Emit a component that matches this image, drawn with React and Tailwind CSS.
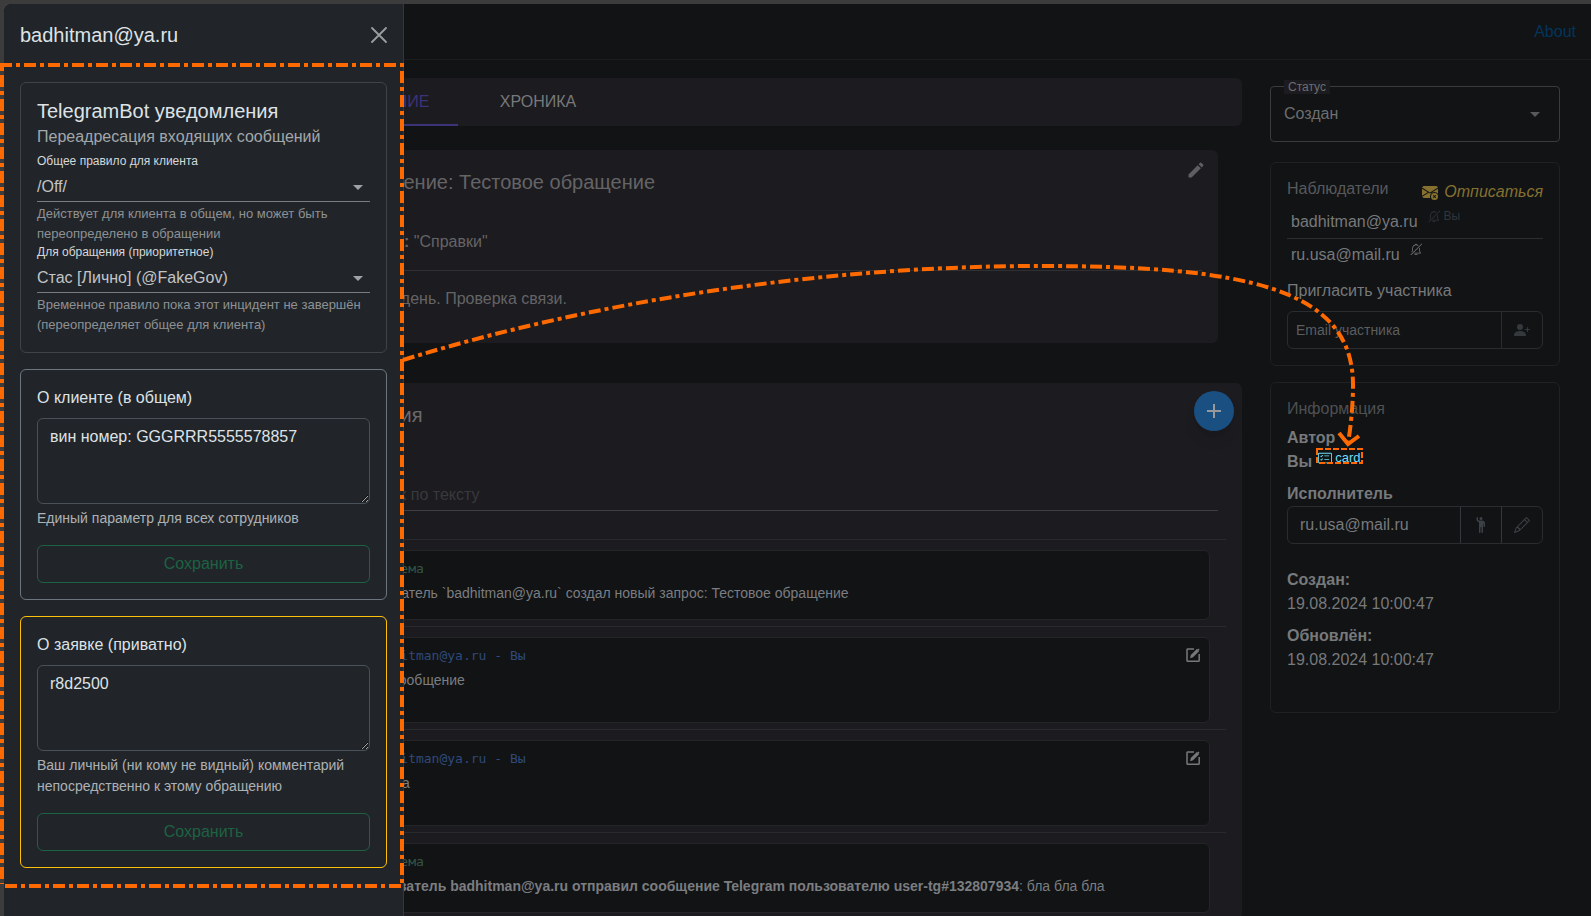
import { BsBellSlash, BsCardChecklist, BsEnvelopeXFill, BsPencil, BsPersonPlusFill, BsPersonRaisedHand } from "react-icons/bs";
import { MdAdd, MdArrowDropDown, MdEdit, MdSearch } from "react-icons/md";

function Chevron({ className }) {
  return <MdArrowDropDown className={`pointer-events-none size-6 shrink-0 ${className}`} aria-hidden="true" />;
}

function RuleSelect({ id, label, value, hint }) {
  return (
    <div>
      <label htmlFor={id} className="block text-[12px] leading-4 text-[#d5d7d9]">{label}</label>
      <div className="mt-1 flex items-center border-b border-[#7a7d80]">
        <select id={id} className="h-7 min-w-0 flex-1 appearance-none bg-transparent text-[16px] text-[#c2c4c6] outline-none">
          <option>{value}</option>
        </select>
        <Chevron className="text-[#a0a3a6]" />
      </div>
      <p className="mt-0.5 text-[13px] leading-5 text-[#8e9194]">{hint}</p>
    </div>
  );
}

function NoteCard({ id, title, value, hint, tone }) {
  return (
    <form className={`rounded-md border p-4 ${tone}`} onSubmit={(e) => e.preventDefault()}>
      <label htmlFor={id} className="block text-[16px] leading-6 text-[#dee2e6]">{title}</label>
      <textarea
        id={id}
        defaultValue={value}
        className="mt-2 block h-[86px] w-full resize-y rounded-md border border-[#495057] bg-transparent px-3 py-1.5 text-[16px] leading-6 text-[#dee2e6] outline-none"
      />
      <p className="mt-1 text-[14px] leading-[21px] text-[#adb1b5]">{hint}</p>
      <button type="submit" className="mt-4 h-[38px] w-full rounded-md border border-[#1d6243] text-[16px] text-[#1d6243]">
        Сохранить
      </button>
    </form>
  );
}

function Message({ author, system, editable, children }) {
  return (
    <li className="border-t border-[#2a2a2d] px-4 pt-2.5 pb-1.5">
      <article className={`rounded-md border border-[#242527] bg-[#111315] px-4 pt-2 ${editable ? "h-[86px]" : "h-[70px]"}`}>
        <header className="flex h-5 items-center justify-between pl-[22px] font-['DejaVu_Sans_Mono','Liberation_Mono',monospace] text-[13px]">
          <span className={system ? "text-[#345546]" : "text-[#2f4a78]"}>{author}</span>
          {editable && (
            <button type="button" aria-label="Редактировать" className="-mt-0.5 -mr-2 text-[#77797b]">
              <EditIcon />
            </button>
          )}
        </header>
        <p className="mt-1 text-[14px] leading-5 text-[#7b7d80]">{children}</p>
      </article>
    </li>
  );
}

function EditIcon() {
  return (
    <svg viewBox="0 0 16 16" className="size-4" fill="none" stroke="currentColor" strokeWidth="1.5" aria-hidden="true">
      <path d="M9 2H2.6A.8.8 0 0 0 2 2.8v10.6a.8.8 0 0 0 .8.8h10.6a.8.8 0 0 0 .8-.8V7" />
      <path d="M6 10.2l.4-1.8 5.4-5.4 1.3 1.3-5.4 5.4z M12.8 2l1.3 1.3" strokeWidth="1.3" fill="currentColor" />
    </svg>
  );
}

function Annotations() {
  return (
    <svg className="pointer-events-none absolute top-0 left-0 z-20 h-[916px] w-[1591px]" viewBox="0 0 1591 916" fill="none" stroke="#ff6a00" strokeWidth="4" aria-hidden="true">
      <g strokeDasharray="12 4 4 4">
        <path d="M0 65H404" />
        <path d="M2 65V884" strokeDashoffset="14" />
        <path d="M402 67V884" strokeDashoffset="-4" />
        <path d="M5 886H402" />
        <path d="M403 360C600 299 830 266 1040 266C1245 266 1353 288 1353 385C1353 405 1351 425 1348 443" />
      </g>
      <path d="M1339 433L1348 444L1359 436" />
      <rect x="1317" y="449" width="45" height="14" strokeWidth="2" strokeDasharray="6 2" />
    </svg>
  );
}

export default function App() {
  return (
    <div className="relative h-screen overflow-hidden bg-[#3c3c3c] pt-1 pl-1 font-['Liberation_Sans',Arial,sans-serif]">
      <div className="h-full rounded-tl-lg bg-[#111315]">
        <header className="flex h-14 items-center justify-end border-b border-[#1b1d1f] pr-[15px]">
          <a href="#about" className="text-[16px] text-[#03355c]">About</a>
        </header>

        <div className="flex items-start gap-7 pt-[18px] pr-[31px] pl-[294px]">
          <main className="min-w-0 flex-1">
            <div role="tablist" className="flex h-12 rounded-md bg-[#1c1b1f] text-[16px]">
              <button type="button" role="tab" aria-selected="true" className="w-40 border-b-2 border-[#3c3478] pt-0.5 text-[#3c3478]">ОБРАЩЕНИЕ</button>
              <button type="button" role="tab" aria-selected="false" className="w-40 text-[#77797c]">ХРОНИКА</button>
            </div>

            <section className="mx-6 mt-6 h-[193px] rounded-md bg-[#1c1b1f] p-4 text-[#646466]">
              <div className="flex items-start justify-between">
                <h1 className="text-[20px] leading-8">Обращение: Тестовое обращение</h1>
                <button type="button" aria-label="Изменить" className="-mt-1.5 -mr-1 text-[#5f5f61]">
                  <MdEdit className="size-5" />
                </button>
              </div>
              <p className="mt-8 text-[16px] leading-6"><b>Рубрика:</b> "Справки"</p>
              <hr className="mt-4 border-[#303033]" />
              <p className="mt-4 text-[16px] leading-6">Добрый день. Проверка связи.</p>
            </section>

            <section className="mt-10 rounded-md bg-[#1c1b1f] px-4 pt-2">
              <div className="-mr-2 flex items-start justify-between">
                <h2 className="pt-2 text-[20px] leading-8 text-[#6a6a6d]">Сообщения</h2>
                <button type="button" aria-label="Добавить сообщение" className="flex size-10 items-center justify-center rounded-full bg-[#1a4f82] text-[#96989a] shadow-lg">
                  <MdAdd className="size-6" />
                </button>
              </div>
              <div className="mx-2 mt-11 flex h-9 items-center gap-4 border-b border-[#3f3f42] pt-1">
                <MdSearch className="size-6 text-[#3f3f42]" aria-hidden="true" />
                <input aria-label="Поиск по тексту" placeholder="Поиск по тексту" className="min-w-0 flex-1 bg-transparent text-[16px] outline-none placeholder:text-[#39393c]" />
              </div>
              <ul className="mt-7">
                <Message author="Система" system>
                  Пользователь `badhitman@ya.ru` создал новый запрос: Тестовое обращение
                </Message>
                <Message author="badhitman@ya.ru - Вы" editable>Новое сообщение</Message>
                <Message author="badhitman@ya.ru - Вы" editable>Проверка</Message>
                <Message author="Система" system>
                  <b>Пользователь badhitman@ya.ru отправил сообщение Telegram пользователю user-tg#132807934</b>: бла бла бла
                </Message>
              </ul>
            </section>
          </main>

          <aside className="w-[290px] shrink-0 pt-2 text-[16px] text-[#77797b]">
            <div className="relative flex h-14 items-center rounded border border-[#3a3b3d] pr-3 pl-[13px]">
              <label htmlFor="status" className="absolute -top-[7px] left-[13px] bg-[#1c1b1f] px-1 text-[12px] leading-[14px] text-[#6c6e70]">Статус</label>
              <select id="status" className="h-full min-w-0 flex-1 appearance-none bg-transparent text-[#6c6e70] outline-none">
                <option>Создан</option>
              </select>
              <Chevron className="text-[#58595b]" />
            </div>

            <section className="mt-5 rounded-md border border-[#1f2123] p-4">
              <div className="flex items-start justify-between leading-6">
                <h2 className="-mt-0.5 text-[#58595b]">Наблюдатели</h2>
                <button type="button" className="mt-px flex items-center gap-1.5 text-[#857030] italic">
                  <BsEnvelopeXFill className="size-4" />Отписаться
                </button>
              </div>
              <ul>
                <li className="flex h-[35px] border-b border-[#2b2d2f] px-1 pt-1.5">
                  badhitman@ya.ru
                  <span className="ml-2.5 flex h-3 items-center gap-1 text-[12px] text-[#30363b]"><BsBellSlash className="size-3" />Вы</span>
                </li>
                <li className="flex px-1 pt-1 leading-6">
                  ru.usa@mail.ru
                  <BsBellSlash className="ml-2.5 size-3 text-[#77797b]" />
                </li>
              </ul>
              <label htmlFor="invite" className="mt-3 block leading-6">Пригласить участника</label>
              <div className="mt-2 flex h-[38px] rounded-md border border-[#2a2d30]">
                <input id="invite" placeholder="Email участника" className="min-w-0 flex-1 bg-transparent px-2 text-[14px] outline-none placeholder:text-[#5b5d5f]" />
                <button type="button" aria-label="Пригласить" className="flex w-[41px] items-center justify-center border-l border-[#2a2d30] text-[#34393e]">
                  <BsPersonPlusFill className="size-4" />
                </button>
              </div>
            </section>

            <section className="mt-4 h-[331px] rounded-md border border-[#1f2123] px-4 pt-3.5">
              <h2 className="leading-6 text-[#4e5052]">Информация</h2>
              <h3 className="mt-[5px] leading-6 font-bold">Автор</h3>
              <p className="flex leading-6">
                <b>Вы</b>
                <a href="#card" className="ml-1.5 flex h-4 items-center gap-[3px] text-[13px] text-[#6edff6]">
                  <BsCardChecklist className="size-[14px]" />card
                </a>
              </p>
              <label htmlFor="executor" className="mt-2 block leading-6 font-bold">Исполнитель</label>
              <div className="flex h-[38px] rounded-md border border-[#2a2d30]">
                <input id="executor" defaultValue="ru.usa@mail.ru" className="min-w-0 flex-1 bg-transparent px-3 outline-none" />
                <button type="button" aria-label="Назначить себя" className="flex w-[41px] items-center justify-center border-l border-[#34383c] text-[#3c4146]">
                  <BsPersonRaisedHand className="size-4" />
                </button>
                <button type="button" aria-label="Изменить исполнителя" className="flex w-[41px] items-center justify-center border-l border-[#34383c] text-[#3c4146]">
                  <BsPencil className="size-4" />
                </button>
              </div>
              <dl className="mt-6 leading-6">
                <dt className="font-bold">Создан:</dt>
                <dd>19.08.2024 10:00:47</dd>
                <dt className="mt-2 font-bold">Обновлён:</dt>
                <dd>19.08.2024 10:00:47</dd>
              </dl>
            </section>
          </aside>
        </div>
      </div>

      <aside role="dialog" aria-label="badhitman@ya.ru" className="absolute top-1 bottom-0 left-1 z-10 w-[400px] rounded-tl-lg border-r border-[#35383b] bg-[#212529] px-4">
        <header className="flex h-[62px] items-center justify-between">
          <h2 className="text-[20px] leading-[30px] text-[#dee2e6]">badhitman@ya.ru</h2>
          <button type="button" aria-label="Закрыть" className="text-[#9b9ea1]">
            <svg viewBox="0 0 16 16" className="size-4" stroke="currentColor" strokeWidth="1.8" strokeLinecap="round" aria-hidden="true">
              <path d="M1 1l14 14M15 1L1 15" />
            </svg>
          </button>
        </header>
        <div className="flex flex-col gap-4 pt-4">
          <section className="h-[271px] rounded-md border border-[#404448] p-4">
            <h3 className="text-[20px] leading-6 text-[#dee2e6]">TelegramBot уведомления</h3>
            <p className="mt-0.5 mb-1 text-[16px] leading-6 text-[#a3a7ab]">Переадресация входящих сообщений</p>
            <RuleSelect id="common-rule" label="Общее правило для клиента" value="/Off/" hint="Действует для клиента в общем, но может быть переопределено в обращении" />
            <RuleSelect id="ticket-rule" label="Для обращения (приоритетное)" value="Стас [Лично] (@FakeGov)" hint="Временное правило пока этот инцидент не завершён (переопределяет общее для клиента)" />
          </section>
          <NoteCard id="client-note" title="О клиенте (в общем)" value="вин номер: GGGRRR5555578857" hint="Единый параметр для всех сотрудников" tone="border-[#6c757d]" />
          <NoteCard id="ticket-note" title="О заявке (приватно)" value="r8d2500" hint="Ваш личный (ни кому не видный) комментарий непосредственно к этому обращению" tone="border-[#ffc107]" />
        </div>
      </aside>

      <Annotations />
    </div>
  );
}
